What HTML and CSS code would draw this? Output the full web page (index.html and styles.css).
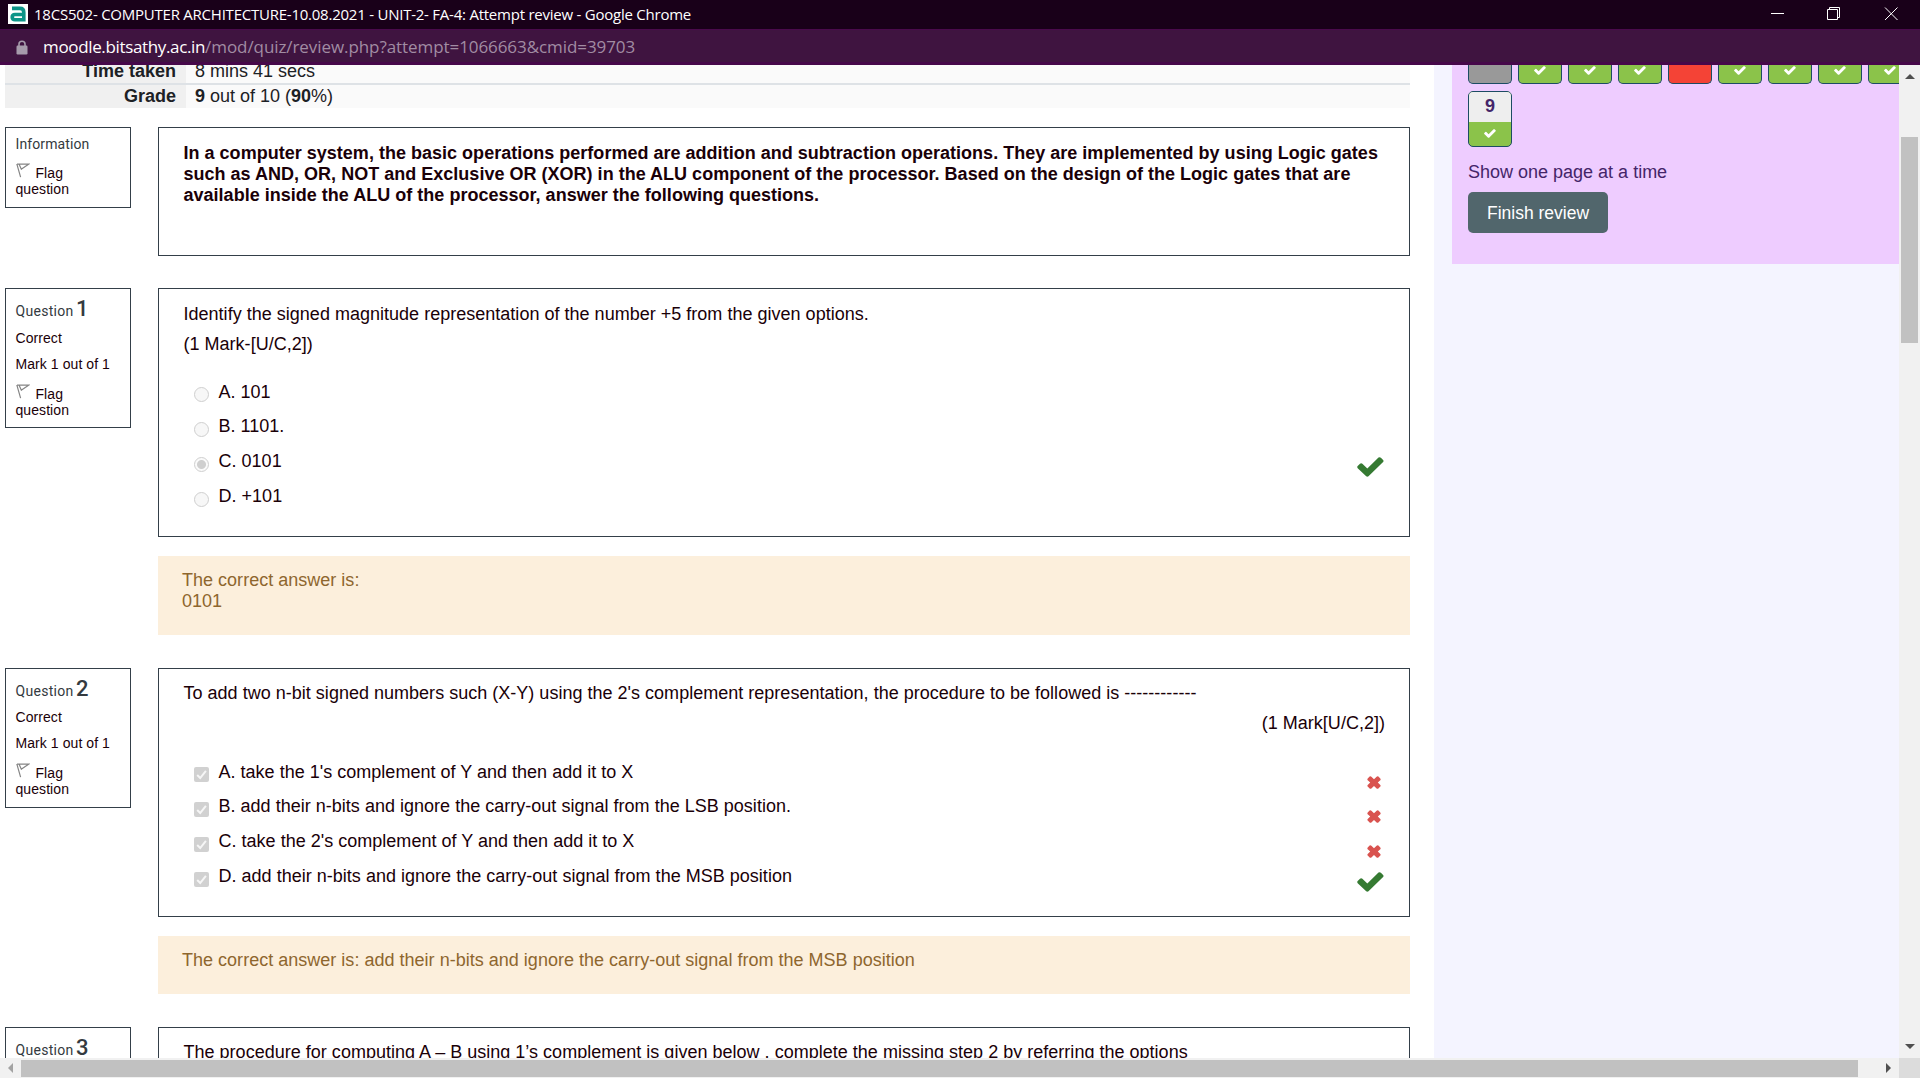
FILE: index.html
```html
<!DOCTYPE html>
<html lang="en">
<head>
<meta charset="utf-8">
<title>18CS502- COMPUTER ARCHITECTURE-10.08.2021 - UNIT-2- FA-4: Attempt review</title>
<link rel="stylesheet" href="styles.css">
</head>
<body>
<svg class="defs" width="0" height="0">
  <symbol id="check" viewBox="0 0 27 20"><path d="M.7 9 3 6.700Q4.200 5.600 5.400 6.700L10.300 11.500 21.500.6Q22.700-.3 23.900.7L26.100 2.900Q27 3.900 26.100 5L11.500 19.300Q10.300 20.200 9.200 19.300L.7 11.200Q-.3 10 .7 9Z"/></symbol>
  <symbol id="cross" viewBox="0 0 14 13"><path d="M.7 2.600 2.600.6Q3.500-.1 4.400.7L7 3.200 9.600.7Q10.500-.1 11.400.6L13.300 2.600Q14 3.400 13.300 4.200L10.800 6.500 13.300 8.900Q14 9.700 13.300 10.500L11.400 12.400Q10.500 13.100 9.600 12.400L7 9.900 4.400 12.400Q3.500 13.100 2.600 12.400L.7 10.500Q0 9.700.7 8.900L3.200 6.500.7 4.200Q0 3.400.7 2.600Z"/></symbol>
  <symbol id="flag" viewBox="0 0 14 15"><path d="M.8.900 4.600 14.200M3.200 1.500 5.600 6.800M1 1.200H12.600L5.200 6.200" fill="none" stroke="#858585" stroke-width="1.200"/></symbol>
  <symbol id="tick" viewBox="0 0 15 15"><path d="M3.200 8 6.200 11 11.900 3.800" fill="none" stroke="#f6f6f6" stroke-width="2"/></symbol>
</svg>

<header class="titlebar">
  <svg class="favicon" viewBox="0 0 20 20"><rect width="20" height="20" fill="#fff"/><path d="M4 4.400H12Q15.800 4.400 15.800 8.500V15.700H7Q4.200 15.700 4.200 13.200 4.200 10.500 7 10.500H15" fill="none" stroke="#0d9488" stroke-width="3.600"/></svg>
  <span class="title">18CS502- COMPUTER ARCHITECTURE-10.08.2021 - UNIT-2- FA-4: Attempt review - Google Chrome</span>
  <svg class="controls" viewBox="0 0 130 16" fill="none" stroke="#fff"><path d="M1 7.500H14M57.500 3.500H67.500V13.500H57.500ZM59.500 3.500V1.500H69.500V11.500H67.500"/><path d="M115 1.500 127.500 14M127.500 1.500 115 14"/></svg>
</header>
<div class="urlbar">
  <svg class="lock" viewBox="0 0 12 15"><path d="M3 6V4Q3 1.200 6 1.200T9 4V6" fill="none" stroke="#a69bab" stroke-width="1.600"/><rect x=".5" y="5.500" width="11" height="9" rx="1.200" fill="#a69bab"/></svg>
  <span class="url"><b>moodle.bitsathy.ac.in</b>/mod/quiz/review.php?attempt=1066663&amp;cmid=39703</span>
</div>

<div class="viewport">
  <main class="page">
    <div class="summary">
      <div class="row first"><div class="label"><span>Time taken</span></div><div class="value"><span>8 mins 41 secs</span></div></div>
      <div class="row"><div class="label">Grade</div><div class="value"><b>9</b> out of 10 (<b>90</b>%)</div></div>
    </div>

    <section class="que description">
      <aside class="info">
        <h3>Information</h3>
        <div class="flag"><svg><use href="#flag"/></svg>Flag<div>question</div></div>
      </aside>
      <div class="content"><div class="box intro">
        <div>In a computer system, the basic operations performed are addition and subtraction operations. They are implemented by using Logic gates</div>
        <div>such as AND, OR, NOT and Exclusive OR (XOR) in the ALU component of the processor. Based on the design of the Logic gates that are</div>
        <div>available inside the ALU of the processor, answer the following questions.</div>
      </div></div>
    </section>

    <section class="que q1">
      <aside class="info">
        <h3>Question <strong>1</strong></h3>
        <p>Correct</p><p>Mark 1 out of 1</p>
        <div class="flag"><svg><use href="#flag"/></svg>Flag<div>question</div></div>
      </aside>
      <div class="content">
        <div class="box">
          <div class="stem">Identify the signed magnitude representation of the number +5 from the given options.</div>
          <div class="marks">(1 Mark-[U/C,2])</div>
          <div class="answers">
            <div class="answer"><i class="radio"></i><span>A. 101</span></div>
            <div class="answer"><i class="radio"></i><span>B. 1101.</span></div>
            <div class="answer"><i class="radio on"></i><span>C. 0101</span><svg class="ok"><use href="#check"/></svg></div>
            <div class="answer"><i class="radio"></i><span>D. +101</span></div>
          </div>
        </div>
        <div class="feedback tall"><div>The correct answer is:</div><div>0101</div></div>
      </div>
    </section>

    <section class="que q2">
      <aside class="info">
        <h3>Question <strong>2</strong></h3>
        <p>Correct</p><p>Mark 1 out of 1</p>
        <div class="flag"><svg><use href="#flag"/></svg>Flag<div>question</div></div>
      </aside>
      <div class="content">
        <div class="box">
          <div class="stem">To add two n-bit signed numbers such (X-Y) using the 2's complement representation, the procedure to be followed is ------------</div>
          <div class="marks align-end">(1 Mark[U/C,2])</div>
          <div class="answers">
            <div class="answer"><svg class="checkbox"><use href="#tick"/></svg><span>A. take the 1's complement of Y and then add it to X</span><svg class="bad"><use href="#cross"/></svg></div>
            <div class="answer"><svg class="checkbox"><use href="#tick"/></svg><span>B. add their n-bits and ignore the carry-out signal from the LSB position.</span><svg class="bad"><use href="#cross"/></svg></div>
            <div class="answer"><svg class="checkbox"><use href="#tick"/></svg><span>C. take the 2's complement of Y and then add it to X</span><svg class="bad"><use href="#cross"/></svg></div>
            <div class="answer"><svg class="checkbox"><use href="#tick"/></svg><span>D. add their n-bits and ignore the carry-out signal from the MSB position</span><svg class="ok"><use href="#check"/></svg></div>
          </div>
        </div>
        <div class="feedback">The correct answer is: add their n-bits and ignore the carry-out signal from the MSB position</div>
      </div>
    </section>

    <section class="que q3">
      <aside class="info"><h3>Question <strong>3</strong></h3></aside>
      <div class="content"><div class="box"><div class="stem">The procedure for computing A – B using 1’s complement is given below , complete the missing step 2 by referring the options</div></div></div>
    </section>
  </main>

  <aside class="drawer">
    <div class="nav">
      <div class="buttons">
        <a class="qn grey"></a>
        <a class="qn"><svg><use href="#check"/></svg></a>
        <a class="qn"><svg><use href="#check"/></svg></a>
        <a class="qn"><svg><use href="#check"/></svg></a>
        <a class="qn red"></a>
        <a class="qn"><svg><use href="#check"/></svg></a>
        <a class="qn"><svg><use href="#check"/></svg></a>
        <a class="qn"><svg><use href="#check"/></svg></a>
        <a class="qn"><svg><use href="#check"/></svg></a>
      </div>
      <a class="qn full"><b>9</b><svg><use href="#check"/></svg></a>
      <div class="showpage">Show one page at a time</div>
      <a class="finish">Finish review</a>
    </div>
  </aside>

  <div class="vscroll"><i class="up"></i><i class="thumb"></i><i class="down"></i></div>
</div>
<div class="hscroll"><i class="arrow-left"></i><i class="thumb"></i><i class="arrow-right"></i><i class="corner"></i></div>
</body>
</html>
```
FILE: styles.css
```css
* { box-sizing: border-box; }
body {
  margin: 0;
  width: 1920px;
  height: 1078px;
  overflow: hidden;
  display: flex;
  flex-direction: column;
  background: #fff;
  color: #1a0008;
  font: 18px/21px "Liberation Sans", Arial, sans-serif;
}
svg { display: block; flex: none; }
.defs { position: absolute; }
h3, p { margin: 0; }

.titlebar {
  flex: none;
  height: 29px;
  display: flex;
  align-items: center;
  padding: 0 20px 1px 8px;
  background: #190019;
  color: #fff;
  white-space: nowrap;
}
.favicon { width: 20px; height: 20px; margin-right: 6px; }
.title { font: 15px/20px "Open Sans", "Noto Sans", sans-serif; letter-spacing: -.236px; }
.controls { width: 130px; height: 16px; margin-left: auto; }

.urlbar {
  flex: none;
  height: 36px;
  display: flex;
  align-items: center;
  padding: 2px 0 0 16px;
  background: #3f1440;
  border-top: 1px solid #4a0a4c;
  border-bottom: 3px solid #46084a;
  color: #a18ca3;
  white-space: nowrap;
}
.lock { width: 12px; height: 15px; margin-right: 15px; }
.url { font: 17px/24px "Open Sans", "Noto Sans", sans-serif; letter-spacing: -.075px; }
.url b { font-weight: 400; color: #fff; letter-spacing: -.35px; }

.viewport { flex: none; height: 993px; display: flex; overflow: hidden; }
.page { width: 1434px; padding: 0 24px 0 5px; overflow: hidden; }

.summary { margin-bottom: 19px; color: #1d2125; }
.row { display: flex; height: 23px; line-height: 23px; background: #fafafa; white-space: nowrap; }
.row.first { height: 20px; border-bottom: 2px solid #dee2e6; }
.label { width: 181px; padding-right: 10px; background: #f0f0f0; text-align: right; font-weight: 700; }
.value { padding-left: 9px; }
.row.first .label, .row.first .value { line-height: 21px; height: 18px; overflow: hidden; }
.row.first span { position: relative; top: -4px; }

.que { display: grid; grid-template-columns: 126px 1252px; column-gap: 27px; align-items: start; }
.description { height: 161px; }
.q1 { height: 380px; }
.q2 { height: 359px; }
.info {
  height: 140px;
  padding: 12px 10px 0 9.5px;
  border: 1px solid #343f49;
  font-size: 14px;
  line-height: 16px;
  letter-spacing: .07px;
}
.info h3 {
  height: 29px;
  font: 14px/16px Roboto, sans-serif;
  color: #343a40;
  letter-spacing: .3px;
}
.q2 h3 { height: 28px; }
.description .info { height: 81px; padding-top: 8px; }
.description h3 { height: 25px; letter-spacing: .1px; }
.info h3 strong { font-size: 22px; font-weight: 500; letter-spacing: 0; margin-left: -1.500px; }
.info p { height: 26px; }
.flag { padding-top: 4px; }
.flag svg { float: left; width: 14px; height: 15px; margin: -2px 6px 0 0; }
.flag div { clear: both; }

.box {
  height: 249px;
  padding: 15px 24px 0 24.5px;
  border: 1px solid #343f49;
  white-space: nowrap;
  letter-spacing: .016px;
}
.intro { height: 129px; font-weight: 700; }
.q2 .box, .q3 .box { padding-top: 14px; }
.marks { margin-top: 9px; }
.align-end { text-align: right; }
.answers { padding: 27px 0 0 9px; }
.q2 .answers { padding-top: 28px; }
.answer { display: flex; height: 35px; }
.answer:first-child { height: 34px; }
.radio, .checkbox { flex: none; width: 15px; height: 15px; margin: 6px 10px 0 1px; }
.answer:first-child > .radio, .answer:first-child > .checkbox { margin-top: 5px; }
.radio { border: 1px solid #cfcfcf; border-radius: 50%; background: #f7f7f7; }
.radio.on { background: radial-gradient(circle, #cfcfcf 4px, #fafafa 5px); }
.checkbox { border-radius: 2px; background: #d1d1d1; }
.answer .ok { width: 27px; height: 20px; margin: 6px 1px 0 auto; fill: #357a32; }
.answer .bad { width: 14px; height: 13px; margin: 14px 4px 0 auto; fill: #d9534f; }

.feedback { height: 58px; margin-top: 19px; padding: 14px 24px; background: #fcefdc; color: #8e662e; letter-spacing: .016px; }
.feedback.tall { height: 79px; }

.drawer { width: 465px; padding-left: 18px; background: #f4f4ff; overflow: hidden; }
.nav { height: 199px; padding-left: 16px; background: #eeccff; color: #442569; overflow: hidden; }
.buttons { display: flex; gap: 6px; width: 500px; }
.qn {
  flex: none;
  display: flex;
  justify-content: center;
  width: 44px;
  height: 19px;
  border: 1px solid #1c4c63;
  border-top: 0;
  border-radius: 0 0 5px 5px;
  background: #8bc34a;
}
.qn svg { width: 12px; height: 9px; margin-top: 1px; fill: #fff; }
.qn.grey { background: #999; }
.qn.red { background: #f44336; }
.qn.full {
  flex-direction: column;
  align-items: center;
  justify-content: flex-start;
  height: 56px;
  margin-top: 7px;
  border-top: 1px solid #1c4c63;
  border-radius: 5px;
  overflow: hidden;
}
.qn b { width: 42px; height: 30px; background: #eee; text-align: center; line-height: 29px; }
.qn.full svg { margin-top: 7px; }
.showpage { margin: 15px 0 9px; }
.finish {
  display: flex;
  align-items: center;
  justify-content: center;
  width: 140px;
  height: 41px;
  padding-top: 1px;
  border-radius: 5px;
  background: #51666c;
  color: #fff;
  font-size: 17.5px;
}

.vscroll { width: 21px; display: flex; flex-direction: column; align-items: center; background: #f1f1f1; }
.up { margin: 9px 0 58px; border: 5px solid transparent; border-top: 0; border-bottom-color: #505050; }
.vscroll .thumb { width: 17px; height: 206px; background: #c1c1c1; }
.down { margin-top: auto; margin-bottom: 9px; border: 5px solid transparent; border-bottom: 0; border-top-color: #505050; }
.hscroll { flex: none; height: 20px; display: flex; align-items: center; background: #f1f1f1; }
.arrow-left { margin: 0 8px; border: 5px solid transparent; border-left: 0; border-right-color: #a3a3a3; }
.hscroll .thumb { width: 1837px; height: 17px; background: #c1c1c1; }
.arrow-right { margin-left: 28px; border: 5px solid transparent; border-right: 0; border-left-color: #505050; }
.corner { width: 21px; height: 20px; margin-left: auto; background: #dcdcdc; }
```
